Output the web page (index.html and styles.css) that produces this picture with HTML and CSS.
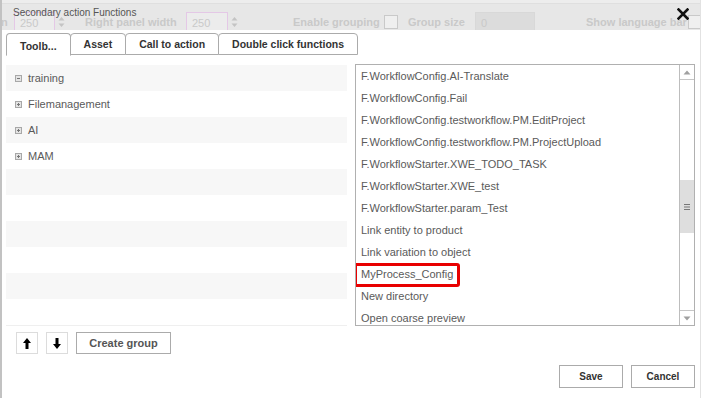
FILE: index.html
```html
<!DOCTYPE html>
<html>
<head>
<meta charset="utf-8">
<link rel="stylesheet" href="styles.css">
</head>
<body>
<div class="page">
  <div class="topbar">
    <div class="bg-form">
      <span class="bg-label w-n">n</span>
      <span class="bg-input pink w41">250</span>
      <span class="bg-spin"><svg width="7" height="12" viewBox="0 0 7 12"><path d="M3.5 1 L6.5 4.5 H0.5 Z M3.5 11 L6.5 7.5 H0.5 Z" fill="#c4c4c4"/></svg></span>
      <span class="bg-label w-rpw">Right panel width</span>
      <span class="bg-input pink w42">250</span>
      <span class="bg-spin"><svg width="7" height="12" viewBox="0 0 7 12"><path d="M3.5 1 L6.5 4.5 H0.5 Z M3.5 11 L6.5 7.5 H0.5 Z" fill="#c4c4c4"/></svg></span>
      <span class="bg-label w-eg">Enable grouping</span>
      <span class="bg-check"></span>
      <span class="bg-label w-gs">Group size</span>
      <span class="bg-input grey w60">0</span>
      <span class="bg-label w-slb">Show language bar</span>
      <span class="bg-check"></span>
    </div>
    <div class="title">Secondary action Functions</div>
    <div class="close"><svg width="12" height="12" viewBox="0 0 12 12"><path d="M1.5 1.5 L10.5 10.5 M10.5 1.5 L1.5 10.5" stroke="#111" stroke-width="2.6" stroke-linecap="square"/></svg></div>
  </div>

  <div class="dialog">
    <div class="tabs">
      <div class="tab active">Toolb...</div>
      <div class="tab">Asset</div>
      <div class="tab">Call to action</div>
      <div class="tab">Double click functions</div>
    </div>

    <div class="content">
      <div class="left-col">
        <div class="groups">
          <div class="group-row"><svg class="tree-icon" width="7" height="7" viewBox="0 0 7 7"><rect x="0.5" y="0.5" width="6" height="6" fill="#e4e4e4" stroke="#a8a8a8"/><path d="M2 3.5 H5" stroke="#777" stroke-width="1"/></svg><span>training</span></div>
          <div class="group-row"><svg class="tree-icon" width="7" height="7" viewBox="0 0 7 7"><rect x="0.5" y="0.5" width="6" height="6" fill="#e4e4e4" stroke="#a8a8a8"/><path d="M2 3.5 H5 M3.5 2 V5" stroke="#777" stroke-width="1"/></svg><span>Filemanagement</span></div>
          <div class="group-row"><svg class="tree-icon" width="7" height="7" viewBox="0 0 7 7"><rect x="0.5" y="0.5" width="6" height="6" fill="#e4e4e4" stroke="#a8a8a8"/><path d="M2 3.5 H5 M3.5 2 V5" stroke="#777" stroke-width="1"/></svg><span>AI</span></div>
          <div class="group-row"><svg class="tree-icon" width="7" height="7" viewBox="0 0 7 7"><rect x="0.5" y="0.5" width="6" height="6" fill="#e4e4e4" stroke="#a8a8a8"/><path d="M2 3.5 H5 M3.5 2 V5" stroke="#777" stroke-width="1"/></svg><span>MAM</span></div>
          <div class="group-row"></div>
          <div class="group-row"></div>
          <div class="group-row"></div>
          <div class="group-row"></div>
          <div class="group-row"></div>
          <div class="group-row"></div>
        </div>
        <div class="group-actions">
          <button class="icon-btn"><svg width="8" height="11" viewBox="0 0 8 11"><path d="M4 0 L8 5 H5.5 V11 H2.5 V5 H0 Z" fill="#000"/></svg></button>
          <button class="icon-btn"><svg width="8" height="11" viewBox="0 0 8 11"><path d="M4 11 L8 6 H5.5 V0 H2.5 V6 H0 Z" fill="#000"/></svg></button>
          <button class="btn create">Create group</button>
        </div>
      </div>

      <div class="func-list">
        <div class="items">
          <div class="item">F.WorkflowConfig.AI-Translate</div>
          <div class="item">F.WorkflowConfig.Fail</div>
          <div class="item">F.WorkflowConfig.testworkflow.PM.EditProject</div>
          <div class="item">F.WorkflowConfig.testworkflow.PM.ProjectUpload</div>
          <div class="item">F.WorkflowStarter.XWE_TODO_TASK</div>
          <div class="item">F.WorkflowStarter.XWE_test</div>
          <div class="item">F.WorkflowStarter.param_Test</div>
          <div class="item">Link entity to product</div>
          <div class="item">Link variation to object</div>
          <div class="item marked">MyProcess_Config</div>
          <div class="item">New directory</div>
          <div class="item">Open coarse preview</div>
        </div>
        <div class="scrollbar">
          <div class="sb-btn up"><svg width="8" height="5" viewBox="0 0 8 5"><path d="M4 0.5 L7.5 4.5 H0.5 Z" fill="#a0a0a0"/></svg></div>
          <div class="sb-track">
            <div class="sb-thumb"><svg width="6" height="6" viewBox="0 0 6 6"><path d="M0 0.5 H6 M0 3 H6 M0 5.5 H6" stroke="#777" stroke-width="1"/></svg></div>
          </div>
          <div class="sb-btn down"><svg width="8" height="5" viewBox="0 0 8 5"><path d="M4 4.5 L7.5 0.5 H0.5 Z" fill="#a0a0a0"/></svg></div>
        </div>
      </div>
    </div>

    <div class="footer">
      <button class="btn foot">Save</button>
      <button class="btn foot">Cancel</button>
    </div>
  </div>
</div>
</body>
</html>
```

FILE: styles.css
```css
*, *::before, *::after { box-sizing: border-box; }
html, body { margin: 0; padding: 0; }
body {
  width: 701px;
  height: 398px;
  overflow: hidden;
  background: #fff;
  font-family: "Liberation Sans", Arial, sans-serif;
}
.page {
  position: relative;
  width: 701px;
  height: 398px;
  border-left: 2px solid #c2c2c2;
  border-right: 1px solid #e2e2e2;
  background: #fff;
}

/* faded background strip */
.topbar {
  position: relative;
  height: 30px;
  overflow: hidden;
  background: linear-gradient(#ededed 0, #ededed 3px, #dfdfdf 3px, #dfdfdf 4px, #e7e7e7 4px);
}
.bg-form {
  display: flex;
  align-items: center;
  height: 20px;
  margin-top: 12px;
  color: #c9c9c9;
  font-size: 11px;
  font-weight: bold;
  white-space: nowrap;
}
.bg-form > * { flex: none; }
.bg-label { display: block; }
.w-n { width: 13px; margin-left: -1px; }
.w-rpw { width: 101px; margin-left: 20px; }
.w-eg { width: 91px; margin-left: 55px; }
.w-gs { width: 67px; margin-left: 10px; }
.w-slb { width: 102px; margin-left: 51px; }
.bg-input {
  height: 20px;
  padding: 4px 0 0 5px;
  font-weight: normal;
  border: 1px solid #d6d6d6;
}
.bg-input.pink { border-color: #e4c8e6; background: #ececec; }
.bg-input.grey { background: #dcdcdc; border-color: #d8d8d8; }
.w41 { width: 41px; }
.w42 { width: 42px; }
.w60 { width: 60px; }
.bg-spin { display: flex; margin-left: 3px; }
.bg-spin svg { display: block; }
.bg-check {
  width: 14px;
  height: 14px;
  border: 1px solid #c9c9c9;
  background: #efefef;
}
.title {
  position: absolute;
  left: 11px;
  top: 7px;
  font-size: 10px;
  line-height: 12px;
  color: #555;
}
.close {
  position: absolute;
  left: 675px;
  top: 8px;
  width: 12px;
  height: 12px;
}
.close svg { display: block; }

/* dialog */
.dialog { background: #fff; }
.tabs {
  display: flex;
  height: 25px;
  padding: 3px 0 0 4px;
}
.tab {
  height: 22px;
  padding: 3px 13px 0;
  border: 1px solid #ababab;
  border-radius: 4px 4px 0 0;
  margin-right: -1px;
  background: #fff;
  color: #333;
  font-size: 10.5px;
  font-weight: bold;
  line-height: 15px;
  white-space: nowrap;
}
.tab.active {
  height: 23px;
  border-bottom-color: #fff;
  padding-top: 5px;
  position: relative;
  z-index: 1;
}

.content {
  display: flex;
  align-items: flex-start;
  gap: 8px;
  padding: 9px 0 0 4px;
}
.left-col { width: 341px; }
.groups {
  margin-top: 1px;
  border-bottom: 1px solid #efefef;
}
.group-row {
  display: flex;
  align-items: center;
  height: 26px;
  padding-left: 9px;
  font-size: 11px;
  color: #5a5a5a;
}
.group-row:nth-child(odd) { background: #f7f7f7; }
.tree-icon { display: block; margin-right: 6px; margin-top: 1px; }
.group-actions {
  display: flex;
  gap: 8px;
  padding: 6px 0 0 10px;
}
.btn, .icon-btn {
  font-family: "Liberation Sans", Arial, sans-serif;
  background: #fff;
  margin: 0;
  cursor: pointer;
}
.icon-btn {
  width: 22px;
  height: 22px;
  border: 1px solid #dcdcdc;
  padding: 0;
  display: flex;
  align-items: center;
  justify-content: center;
}
.icon-btn svg { display: block; }
.btn {
  border: 1px solid #ababab;
  color: #555;
  font-weight: bold;
  padding: 0;
}
.btn.create {
  width: 95px;
  height: 22px;
  font-size: 11px;
}

.func-list {
  display: flex;
  width: 340px;
  height: 262px;
  border: 1px solid #b0b0b0;
}
.items {
  flex: 1;
  overflow: hidden;
}
.item {
  height: 22px;
  line-height: 22px;
  padding-left: 5px;
  font-size: 11px;
  color: #5a5a5a;
  white-space: nowrap;
}
.item.marked { position: relative; }
.item.marked::after {
  content: "";
  position: absolute;
  left: -2px;
  top: 0;
  width: 106px;
  height: 24px;
  border: 3px solid #e80000;
  border-radius: 3px;
}
.scrollbar {
  width: 15px;
  display: flex;
  flex-direction: column;
  border-left: 1px solid #bdbdbd;
}
.sb-btn {
  height: 15px;
  display: flex;
  align-items: center;
  justify-content: center;
}
.sb-btn svg { display: block; }
.sb-btn.up { border-bottom: 1px solid #c6c6c6; }
.sb-btn.down { border-top: 1px solid #c6c6c6; }
.sb-track { flex: 1; }
.sb-thumb {
  margin-top: 100px;
  height: 53px;
  background: #dedede;
  display: flex;
  align-items: center;
  justify-content: center;
}
.sb-thumb svg { display: block; }

.footer {
  display: flex;
  justify-content: flex-end;
  gap: 8px;
  padding: 11px 5px 0 0;
}
.btn.foot {
  width: 64px;
  height: 23px;
  font-size: 10px;
  color: #333;
}
```
